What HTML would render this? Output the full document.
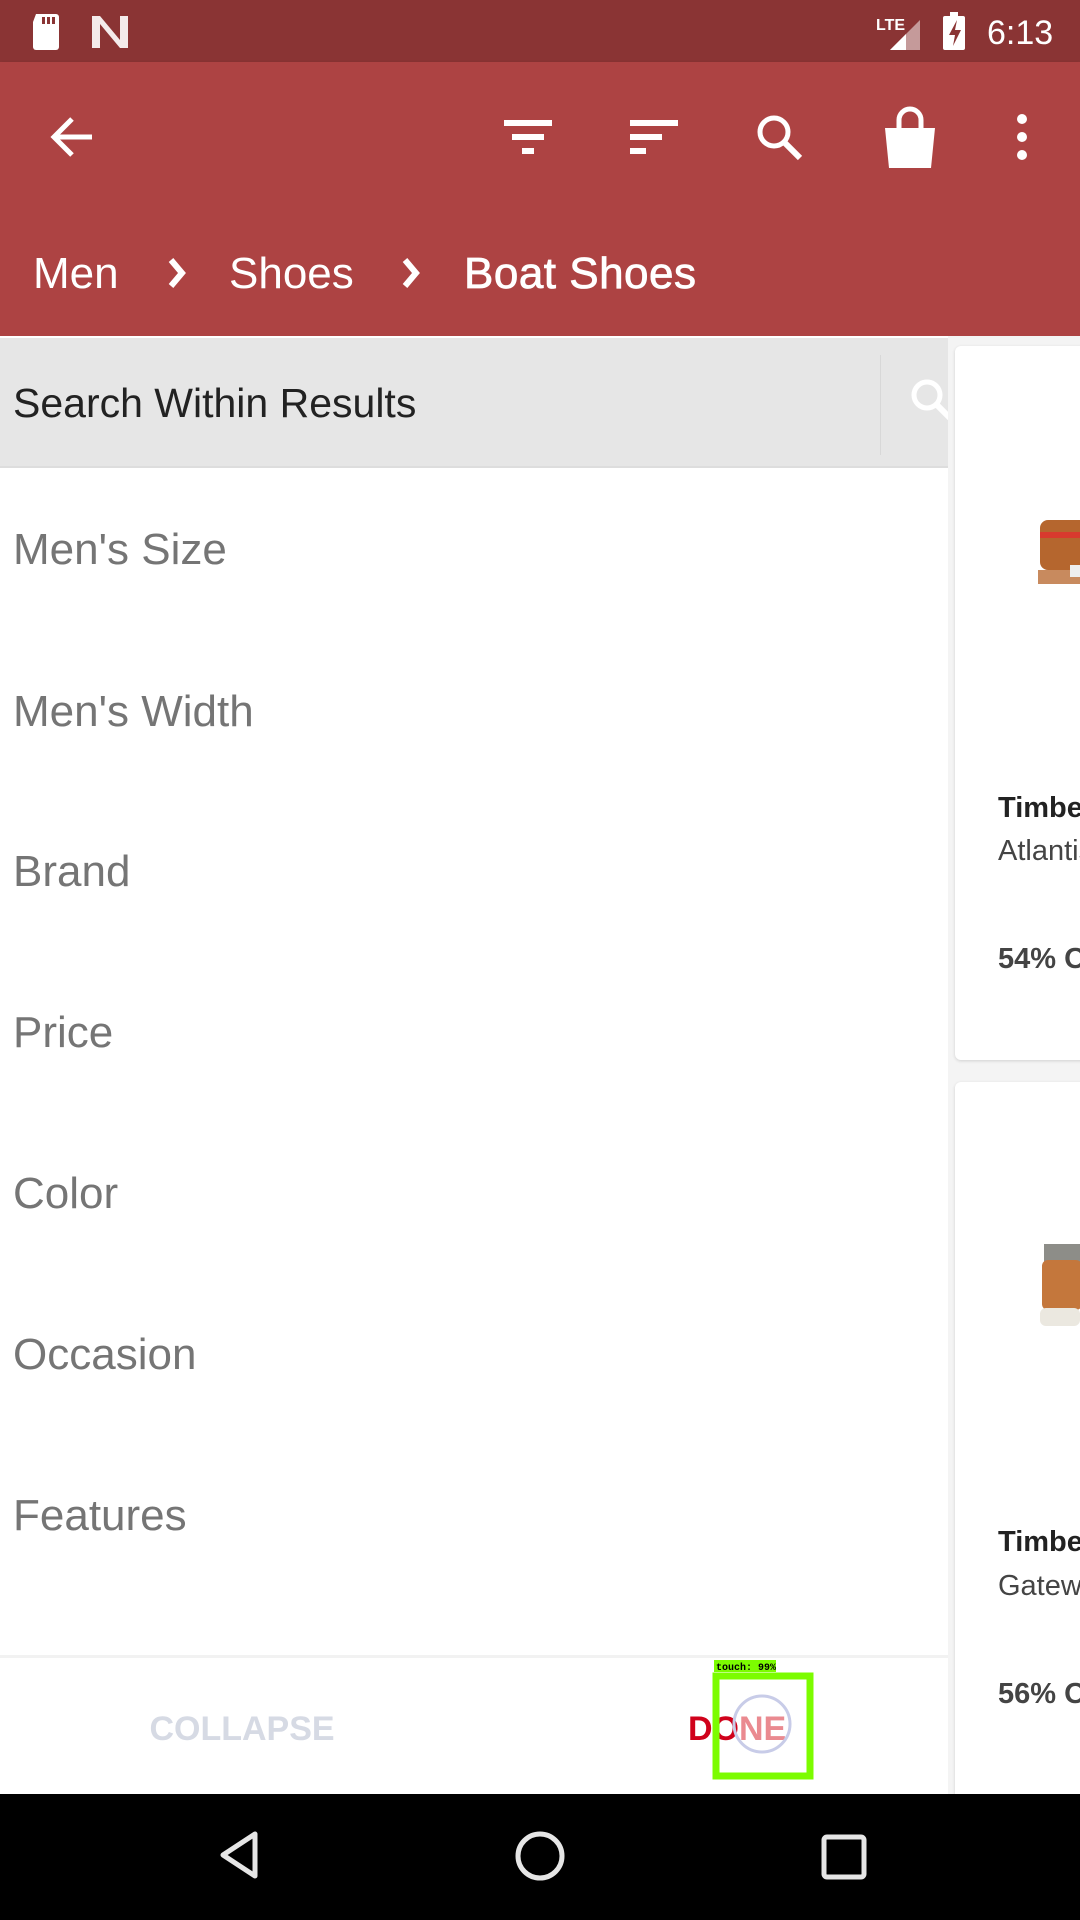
<!DOCTYPE html>
<html><head><meta charset="utf-8"><style>
*{margin:0;padding:0;box-sizing:border-box}
html,body{width:1080px;height:1920px;overflow:hidden}
body{position:relative;background:#fff;font-family:"Liberation Sans",sans-serif}
.abs{position:absolute;white-space:nowrap}
.item{position:absolute;left:13px;font-size:44px;color:#757575;line-height:50px;white-space:nowrap}
</style></head><body>
<div class="abs" style="left:0;top:0;width:1080px;height:62px;background:#8a3434"></div>
<svg class="abs" style="left:0;top:0" width="1080" height="62">
<path d="M36 14h20a3 3 0 0 1 3 3v30a3 3 0 0 1-3 3H36a3 3 0 0 1-3-3V22z" fill="#fff"/>
<rect x="42" y="17" width="3" height="7" fill="#8a3434"/><rect x="47" y="17" width="3" height="7" fill="#8a3434"/><rect x="52" y="17" width="3" height="7" fill="#8a3434"/>
<path d="M92 16h8l20 24V16h8v32h-8L100 24v24h-8z" fill="#fff" opacity="0.9"/>
<text x="876" y="30" font-size="16" fill="#fff" font-family="Liberation Sans" font-weight="bold">LTE</text>
<path d="M920 20v30h-30z" fill="#fff" opacity="0.5"/><path d="M906 34v16h-16z" fill="#fff"/>
<rect x="943" y="16" width="22" height="34" rx="2" fill="#fff"/><rect x="950" y="12" width="8" height="5" fill="#fff"/>
<path d="M957 20l-8 15h6l-2 11 8-16h-6z" fill="#8a3434"/>
<text x="987" y="44" font-size="34" fill="#fff" font-family="Liberation Sans">6:13</text>
</svg>
<div class="abs" style="left:0;top:62px;width:1080px;height:274px;background:#ad4343;box-shadow:0 3px 5px rgba(0,0,0,.25)"></div>
<svg class="abs" style="left:0;top:62px" width="1080" height="274">
<path d="M92 75H56M72 57L54 75l18 18" stroke="#fff" stroke-width="5" fill="none"/>
<rect x="504" y="58" width="48" height="6" fill="#fff"/><rect x="512" y="72" width="32" height="6" fill="#fff"/><rect x="522" y="86" width="12" height="6" fill="#fff"/>
<rect x="630" y="58" width="48" height="6" fill="#fff"/><rect x="630" y="72" width="32" height="6" fill="#fff"/><rect x="630" y="86" width="16" height="6" fill="#fff"/>
<circle cx="774" cy="70" r="14" stroke="#fff" stroke-width="5" fill="none"/><path d="M784 80l16 16" stroke="#fff" stroke-width="6"/>
<path d="M885 66h50l-4 40h-42z" fill="#fff"/><path d="M899 66v-8a11 11 0 0 1 22 0v8" stroke="#fff" stroke-width="5" fill="none"/>
<circle cx="1022" cy="57" r="5" fill="#fff"/><circle cx="1022" cy="75" r="5" fill="#fff"/><circle cx="1022" cy="93" r="5" fill="#fff"/>
<path d="M171 198l11 13-11 13M405 198l11 13-11 13" stroke="#fff" stroke-width="6" fill="none"/>
</svg>
<div class="abs" style="left:33px;top:248px;font-size:44px;color:#fff;line-height:52px">Men</div>
<div class="abs" style="left:229px;top:248px;font-size:44px;color:#fff;line-height:52px">Shoes</div>
<div class="abs" style="left:464px;top:248px;font-size:44px;color:#fff;line-height:52px;letter-spacing:0.5px;-webkit-text-stroke:0.8px #fff">Boat Shoes</div>
<div class="abs" style="left:948px;top:336px;width:132px;height:1458px;background:#f4f4f4;overflow:hidden">
<div class="abs" style="left:7px;top:10px;width:140px;height:714px;background:#fff;border-radius:6px;box-shadow:0 1px 3px rgba(0,0,0,.15)"></div>
<div class="abs" style="left:7px;top:746px;width:140px;height:720px;background:#fff;border-radius:6px;box-shadow:0 1px 3px rgba(0,0,0,.15)"></div>
<svg class="abs" style="left:82px;top:164px" width="50" height="140"><rect x="10" y="20" width="50" height="50" rx="8" fill="#b5662e"/><rect x="10" y="32" width="50" height="6" fill="#d83a2e"/><rect x="8" y="70" width="50" height="14" fill="#c88a5e"/><rect x="40" y="65" width="20" height="12" fill="#eee"/></svg>
<svg class="abs" style="left:82px;top:894px" width="50" height="140"><rect x="14" y="14" width="40" height="20" fill="#8d8d88"/><rect x="12" y="30" width="40" height="50" rx="6" fill="#c4773c"/><rect x="10" y="78" width="40" height="18" rx="6" fill="#ebe8e0"/></svg>
<div class="abs" style="left:50px;top:456px;font-size:29px;font-weight:bold;color:#222">Timberland</div>
<div class="abs" style="left:50px;top:499px;font-size:29px;color:#444">Atlantis</div>
<div class="abs" style="left:50px;top:607px;font-size:29px;font-weight:bold;color:#444">54% Off</div>
<div class="abs" style="left:50px;top:1190px;font-size:29px;font-weight:bold;color:#222">Timberland</div>
<div class="abs" style="left:50px;top:1234px;font-size:29px;color:#444">Gateway</div>
<div class="abs" style="left:50px;top:1342px;font-size:29px;font-weight:bold;color:#444">56% Off</div>
</div>
<div class="abs" style="left:0;top:336px;width:948px;height:1458px;background:#fff"></div>
<div class="abs" style="left:0;top:338px;width:948px;height:130px;background:#e6e6e6;border-bottom:2px solid #ddd"></div>
<div class="abs" style="left:880px;top:355px;width:1px;height:100px;background:#d8d8d8"></div>
<svg class="abs" style="left:880px;top:338px" width="68" height="130"><circle cx="47" cy="57" r="13" stroke="#fff" stroke-width="5" fill="none"/><path d="M56 66l14 14" stroke="#fff" stroke-width="6"/></svg>
<div class="abs" style="left:13px;top:378px;font-size:41px;color:#222;line-height:50px">Search Within Results</div>
<div class="item" style="top:525px">Men's Size</div>
<div class="item" style="top:687px">Men's Width</div>
<div class="item" style="top:847px">Brand</div>
<div class="item" style="top:1008px">Price</div>
<div class="item" style="top:1169px">Color</div>
<div class="item" style="top:1330px">Occasion</div>
<div class="item" style="top:1491px">Features</div>
<div class="abs" style="left:0;top:1655px;width:948px;height:3px;background:#f2f2f2"></div>
<div class="abs" style="left:0;top:1710px;width:484px;text-align:center;font-size:34px;font-weight:bold;color:#d6dae4">COLLAPSE</div>
<div class="abs" style="left:688px;top:1710px;font-size:34px;font-weight:bold;color:#d0021b">DO<span style="color:#ea8a90">NE</span></div>
<svg class="abs" style="left:700px;top:1660px" width="130" height="125">
<circle cx="62" cy="64" r="28" fill="none" stroke="#c8cce8" stroke-width="3"/>
<rect x="16" y="16" width="94" height="100" fill="none" stroke="#7cfc00" stroke-width="7"/>
<rect x="14" y="0" width="62" height="12" fill="#7cfc00"/>
<text x="16" y="10" font-size="10" font-family="Liberation Mono" font-weight="bold">touch: 99%</text>
</svg>
<div class="abs" style="left:0;top:1794px;width:1080px;height:126px;background:#000"></div>
<svg class="abs" style="left:0;top:1794px" width="1080" height="126">
<path d="M255 40v42l-32-21z" stroke="#e6e6e6" stroke-width="5" fill="none" stroke-linejoin="round"/>
<circle cx="540" cy="62" r="22" stroke="#e6e6e6" stroke-width="5" fill="none"/>
<rect x="824" y="43" width="40" height="40" rx="3" stroke="#e6e6e6" stroke-width="5" fill="none"/>
</svg>
</body></html>
